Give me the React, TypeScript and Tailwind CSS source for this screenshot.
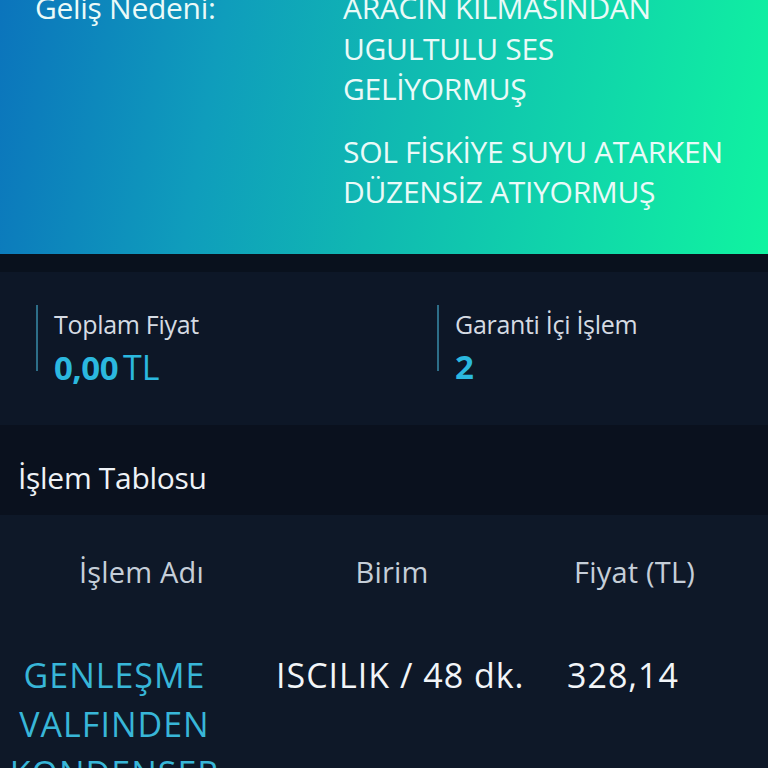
import React from "react";

const font = { fontFamily: '"Open Sans", "Noto Sans", sans-serif' };

export default function App() {
  return (
    <div className="w-[768px] h-[768px] overflow-hidden bg-[#0e1828]" style={font}>
      {/* gradient header */}
      <div className="h-[254px] overflow-hidden bg-[linear-gradient(100deg,#0b74bc_0%,#0f9dbc_28%,#10b8b2_50%,#10d6aa_75%,#10f4a0_100%)]">
        <div className="flex -mt-[12px] text-[#eafaf8] text-[30px] leading-[40.5px] tracking-[-0.3px]">
          <div className="w-[343px] pl-[35px]">Geliş Nedeni:</div>
          <div className="flex flex-col gap-[22px]">
            <div>
              ARACIN KILMASINDAN
              <br />
              UGULTULU SES
              <br />
              GELİYORMUŞ
            </div>
            <div>
              SOL FİSKİYE SUYU ATARKEN
              <br />
              DÜZENSİZ ATIYORMUŞ
            </div>
          </div>
        </div>
      </div>
      {/* dark band */}
      <div className="h-[18px] bg-[#09111d]" />
      {/* stats */}
      <div className="h-[153px] bg-[#0d1727] flex pt-[33px]">
        <div className="w-[437px] pl-[36px] flex">
          <div className="w-[2px] h-[66px] bg-[#2d6e88]" />
          <div className="pl-[16px] mt-[2px]">
            <div className="text-[25px] leading-[34px] text-[#d5dbe3] tracking-[-0.3px]">Toplam Fiyat</div>
            <div className="flex items-baseline text-[#2bb8df] mt-[4px]">
              <span className="text-[33px] leading-[44px] font-bold tracking-[-0.5px]">0,00</span>
              <span className="text-[34px] leading-[44px] ml-[5px]">TL</span>
            </div>
          </div>
        </div>
        <div className="flex">
          <div className="w-[2px] h-[66px] bg-[#2d6e88]" />
          <div className="pl-[16px] mt-[2px]">
            <div className="text-[25px] leading-[34px] text-[#d5dbe3] tracking-[-0.3px]">Garanti İçi İşlem</div>
            <div className="text-[33px] leading-[44px] font-bold text-[#2bb8df] mt-[4px]">2</div>
          </div>
        </div>
      </div>
      {/* title band */}
      <div className="h-[90px] bg-[#0a111e] pl-[18px] pt-[33px]">
        <div className="text-[30px] leading-[40px] text-[#eef2f6] tracking-[-0.3px]">İşlem Tablosu</div>
      </div>
      {/* table */}
      <div className="bg-[#0e1828]">
        <div className="flex pt-[37px] text-[29px] leading-[40px] text-[#c5ced8] tracking-[0.2px]">
          <div className="w-[283px] text-center">İşlem Adı</div>
          <div className="w-[218px] text-center">Birim</div>
          <div className="flex-1 text-center">Fiyat (TL)</div>
        </div>
        <div className="flex pt-[59px] text-[34px] leading-[49px] tracking-[1px]">
          <div className="w-[229px] text-center text-[#38b6d8]">
            GENLEŞME
            <br />
            VALFINDEN
            <br />
            KONDENSER
          </div>
          <div className="w-[338px] pl-[47px] text-[#f2f5f8]">ISCILIK / 48 dk.</div>
          <div className="flex-1 text-[#f2f5f8]">328,14</div>
        </div>
      </div>
    </div>
  );
}
